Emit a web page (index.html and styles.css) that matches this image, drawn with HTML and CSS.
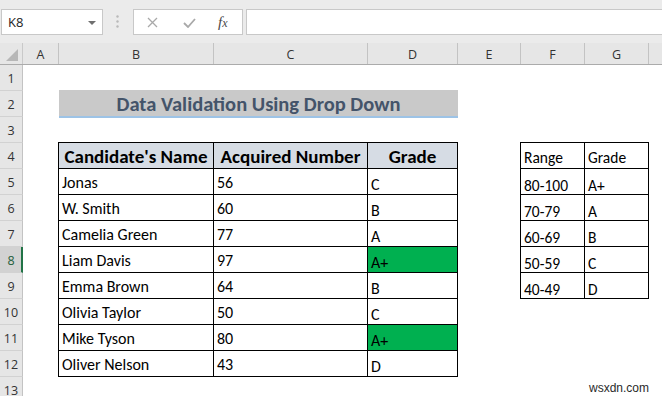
FILE: index.html
```html
<!DOCTYPE html>
<html>
<head>
<meta charset="utf-8">
<link rel="stylesheet" href="styles.css">
</head>
<body>
<div class="app">
  <div class="toolbar">
    <div class="namebox">
      <span class="nb-text">K8</span>
      <svg class="caret" width="8" height="4" viewBox="0 0 8 4"><path d="M0 0h8L4 4z" fill="#6f6f6f"/></svg>
    </div>
    <svg class="grip" width="3" height="13" viewBox="0 0 3 13"><circle cx="1.5" cy="1.5" r="1.2" fill="#b9b9b9"/><circle cx="1.5" cy="6.5" r="1.2" fill="#b9b9b9"/><circle cx="1.5" cy="11.5" r="1.2" fill="#b9b9b9"/></svg>
    <div class="fbtns">
      <svg class="ic-x" width="11" height="11" viewBox="0 0 11 11"><path d="M1 1l9 9M10 1l-9 9" stroke="#a9a9a9" stroke-width="1.3" fill="none"/></svg>
      <svg class="ic-ok" width="13" height="10" viewBox="0 0 13 10"><path d="M1 5l4 4 7-8" stroke="#a9a9a9" stroke-width="1.8" fill="none"/></svg>
      <span class="fx"><i>f</i><i class="fx-x">x</i></span>
    </div>
    <div class="finput"></div>
  </div>

  <div class="colheads">
    <div class="corner"><svg width="12" height="12" viewBox="0 0 12 12"><path d="M12 0V12H0Z" fill="#b7b7b7"/></svg></div>
    <div class="ch ca">A</div>
    <div class="ch cb">B</div>
    <div class="ch cc">C</div>
    <div class="ch cd">D</div>
    <div class="ch ce">E</div>
    <div class="ch cf">F</div>
    <div class="ch cg">G</div>
    <div class="ch crest"></div>
  </div>

  <div class="body">
    <div class="rowheads">
      <div class="rh">1</div>
      <div class="rh">2</div>
      <div class="rh">3</div>
      <div class="rh">4</div>
      <div class="rh">5</div>
      <div class="rh">6</div>
      <div class="rh">7</div>
      <div class="rh rh-sel">8</div>
      <div class="rh">9</div>
      <div class="rh">10</div>
      <div class="rh">11</div>
      <div class="rh">12</div>
      <div class="rh">13</div>
    </div>
    <div class="sheet">
      <div class="title">Data Validation Using Drop Down</div>

      <div class="main">
        <div class="c hd">Candidate's Name</div>
        <div class="c hd">Acquired Number</div>
        <div class="c hd">Grade</div>

        <div class="c">Jonas</div><div class="c">56</div><div class="c g">C</div>
        <div class="c">W. Smith</div><div class="c">60</div><div class="c g">B</div>
        <div class="c">Camelia Green</div><div class="c">77</div><div class="c g">A</div>
        <div class="c">Liam Davis</div><div class="c">97</div><div class="c g green">A+</div>
        <div class="c">Emma Brown</div><div class="c">64</div><div class="c g">B</div>
        <div class="c">Olivia Taylor</div><div class="c">50</div><div class="c g">C</div>
        <div class="c">Mike Tyson</div><div class="c">80</div><div class="c g green">A+</div>
        <div class="c">Oliver Nelson</div><div class="c">43</div><div class="c g">D</div>
      </div>

      <div class="lookup">
        <div class="c g lk lh">Range</div><div class="c g lk lh">Grade</div>
        <div class="c g lk">80-100</div><div class="c g lk">A+</div>
        <div class="c g lk">70-79</div><div class="c g lk">A</div>
        <div class="c g lk">60-69</div><div class="c g lk">B</div>
        <div class="c g lk">50-59</div><div class="c g lk">C</div>
        <div class="c g lk">40-49</div><div class="c g lk">D</div>
      </div>
    </div>
  </div>

  <div class="wm">wsxdn.com</div>
</div>
</body>
</html>
```

FILE: styles.css
```css
* { box-sizing: border-box; }

html, body {
  margin: 0;
  padding: 0;
  background: #ffffff;
}

.app {
  position: relative;
  width: 662px;
  height: 396px;
  overflow: hidden;
  font-family: "Open Sans", "Noto Sans", sans-serif;
}

/* ---------- formula bar ---------- */
.toolbar {
  height: 43px;
  background: #ebebeb;
  display: flex;
  align-items: flex-start;
  padding-top: 9px;
}

.namebox {
  margin-left: 1px;
  width: 102px;
  height: 26px;
  background: #ffffff;
  border: 1px solid #c8c8c8;
  display: flex;
  align-items: center;
  justify-content: space-between;
  padding: 0 6px 0 6px;
}

.nb-text {
  font-size: 13px;
  color: #222;
}

.caret { margin-top: 1px; }

.grip {
  margin-left: 13px;
  margin-top: 6px;
}

.fbtns {
  margin-left: 14px;
  width: 110px;
  height: 26px;
  background: #ffffff;
  border: 1px solid #c8c8c8;
  display: flex;
  align-items: center;
  padding-left: 13px;
}

.ic-x { margin-top: 1px; }
.ic-ok { margin-left: 25px; margin-top: 1px; }

.fx {
  margin-left: 22px;
  font-family: "Liberation Serif", serif;
  font-size: 15px;
  color: #4a4a4a;
  line-height: 1;
}
.fx-x { font-size: 12px; }

.finput {
  margin-left: 3px;
  flex: 1;
  height: 26px;
  background: #ffffff;
  border: 1px solid #c8c8c8;
  border-right: none;
}

/* ---------- column headers ---------- */
.colheads {
  display: flex;
  height: 22px;
  background: #e6e6e6;
  border-bottom: 1px solid #ababab;
}

.corner {
  width: 23px;
  display: flex;
  align-items: flex-end;
  justify-content: flex-end;
  padding: 0 4px 3px 0;
  border-right: 1px solid #c9c9c9;
}

.ch {
  border-right: 1px solid #c3c3c3;
  font-size: 12.5px;
  color: #333;
  display: flex;
  align-items: center;
  justify-content: center;
  padding-top: 1px;
}
.ca { width: 36px; }
.cb { width: 155px; }
.cc { width: 154px; }
.cd { width: 90px; }
.ce { width: 63px; }
.cf { width: 64px; }
.cg { width: 64px; }
.crest { flex: 1; border-right: none; }

/* ---------- body ---------- */
.body {
  display: flex;
}

.rowheads {
  width: 23px;
  flex: none;
  display: flex;
  flex-direction: column;
}

.rh {
  height: 26px;
  background: #e6e6e6;
  border-bottom: 1px solid #d2d2d2;
  border-right: 1px solid #c3c3c3;
  font-size: 12.5px;
  color: #333;
  display: flex;
  align-items: center;
  justify-content: center;
  padding-top: 2px;
}

.rh-sel {
  background: #d2d2d2;
  border-right: 2px solid #217346;
  color: #1e5e3a;
  padding-left: 1px;
}

.sheet {
  flex: 1;
  display: grid;
  grid-template-columns: 36px 155px 154px 90px 63px 64px 64px 1fr;
  grid-template-rows: repeat(13, 26px);
  font-family: Carlito, Calibri, Lato, sans-serif;
  color: #000;
}

.title {
  grid-column: 2 / 5;
  grid-row: 2;
  margin-top: -1px;
  height: 28px;
  background: #c9c9c9;
  border-bottom: 2px solid #9dc3e6;
  display: flex;
  align-items: center;
  justify-content: center;
  font-weight: bold;
  font-size: 20.5px;
  color: #44546a;
  padding-top: 1px;
}

.main {
  grid-column: 2 / 5;
  grid-row: 4 / 13;
  margin: -1px 0 0 -1px;
  border-left: 1px solid #000;
  border-top: 1px solid #000;
  display: grid;
  grid-template-columns: 155px 154px 90px;
  grid-auto-rows: 26px;
}

.lookup {
  grid-column: 6 / 8;
  grid-row: 4 / 10;
  margin: -1px 0 0 -1px;
  border-left: 1px solid #000;
  border-top: 1px solid #000;
  display: grid;
  grid-template-columns: 64px 64px;
  grid-auto-rows: 26px;
}

.c {
  border-right: 1px solid #000;
  border-bottom: 1px solid #000;
  display: flex;
  align-items: center;
  padding: 2px 0 0 3px;
  font-size: 16px;
  line-height: 1;
  white-space: nowrap;
}

.hd {
  background: #d6dce4;
  font-weight: bold;
  font-size: 19px;
  justify-content: center;
  padding: 1px 0 0 0;
}

.g {
  align-items: flex-end;
  padding: 0 0 1px 3px;
  font-size: 16px;
}

.lk { font-size: 15.5px; }

.lh { padding-bottom: 3px; }

.green { background: #00b050; }

/* ---------- watermark ---------- */
.wm {
  position: absolute;
  right: 13px;
  bottom: 1px;
  font-family: "Liberation Sans", Arial, sans-serif;
  font-size: 12px;
  color: #2a2a2a;
}
```
